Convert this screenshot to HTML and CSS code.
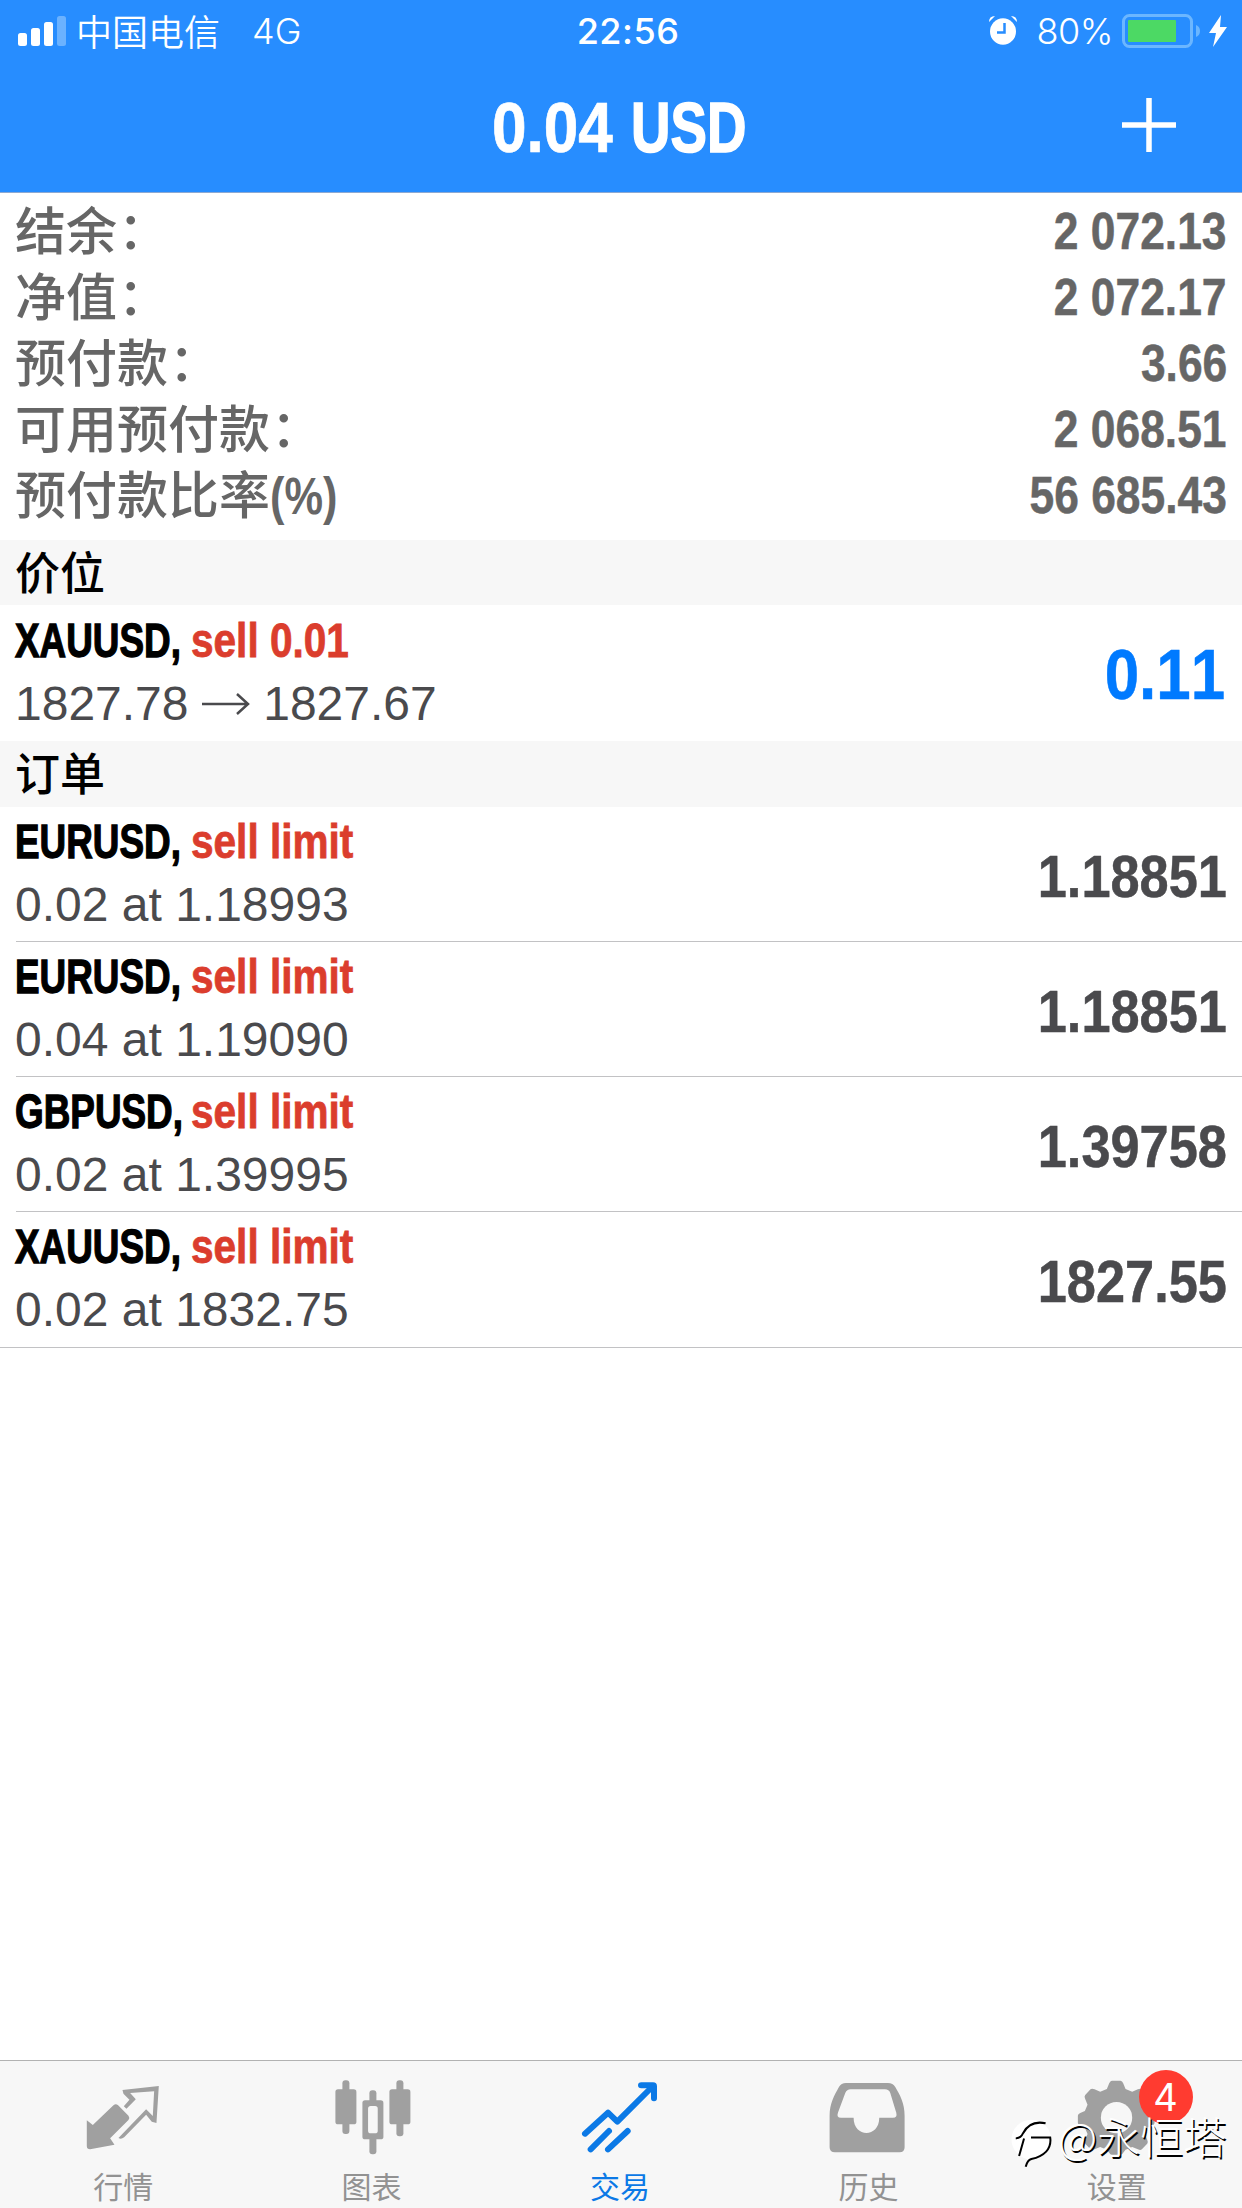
FILE: index.html
```html
<!DOCTYPE html>
<html lang="zh-CN">
<head>
<meta charset="utf-8">
<title>交易</title>
<link rel="stylesheet" href="styles.css">
</head>
<body>
<header class="top">
  <div class="status">
    <div class="status-left">
      <svg class="signal" viewBox="0 0 48 30"><rect y="17" width="9" height="13" rx="2.5"/><rect x="13" y="12" width="9" height="18" rx="2.5"/><rect x="26" y="6" width="9" height="24" rx="2.5"/><rect class="dim" x="39" width="9" height="30" rx="2.5"/></svg>
      <span class="carrier">中国电信</span>
      <span class="network">4G</span>
    </div>
    <span class="clock">22:56</span>
    <div class="status-right">
      <svg class="alarm" viewBox="0 0 28 29"><ellipse cx="14" cy="15.500" rx="13" ry="13.200"/><path d="M0 6Q0 0 6 0Zm28 0Q28 0 22 0Z"/><path class="hands" d="M15.500 7v9.500H8"/></svg>
      <span class="percent">80%</span>
      <svg class="battery" viewBox="0 0 79 34"><rect class="shell" x="1.500" y="1.500" width="68" height="31" rx="6"/><rect class="charge" x="6" y="6" width="48" height="22" rx="1"/><path class="tip" d="M74 11q4 1.500 4 6t-4 6z"/></svg>
      <svg class="bolt" viewBox="0 0 18 32"><path d="M12 0 0 18h7L4 32 18 12h-7z"/></svg>
    </div>
  </div>
  <div class="nav">
    <h1 class="title"><span class="figures">0.04</span><span class="caps">USD</span></h1>
    <svg class="plus" viewBox="0 0 54 54"><path d="M27 0v54M0 27h54"/></svg>
  </div>
</header>

<main>
  <dl class="account">
    <div class="line"><dt>结余<span class="colon">：</span></dt><dd>2 072.13</dd></div>
    <div class="line"><dt>净值<span class="colon">：</span></dt><dd>2 072.17</dd></div>
    <div class="line"><dt>预付款<span class="colon">：</span></dt><dd>3.66</dd></div>
    <div class="line"><dt>可用预付款<span class="colon">：</span></dt><dd>2 068.51</dd></div>
    <div class="line"><dt>预付款比率<span class="unit">(%)</span></dt><dd>56 685.43</dd></div>
  </dl>

  <h2 class="section">价位</h2>
  <div class="row position">
    <div class="info">
      <div class="deal"><span class="symbol">XAUUSD,</span><span class="side">sell 0.01</span></div>
      <div class="detail">1827.78 <svg class="arrow" viewBox="0 0 48 22"><path d="M0 11h45M35 1l11 10-11 10"/></svg> 1827.67</div>
    </div>
    <div class="profit">0.11</div>
  </div>

  <h2 class="section pending">订单</h2>
  <div class="orders">
    <div class="row">
      <div class="info"><div class="deal"><span class="symbol">EURUSD,</span><span class="side">sell limit</span></div><div class="detail">0.02 at 1.18993</div></div>
      <div class="price">1.18851</div>
    </div>
    <div class="row">
      <div class="info"><div class="deal"><span class="symbol">EURUSD,</span><span class="side">sell limit</span></div><div class="detail">0.04 at 1.19090</div></div>
      <div class="price">1.18851</div>
    </div>
    <div class="row">
      <div class="info"><div class="deal"><span class="symbol">GBPUSD,</span><span class="side">sell limit</span></div><div class="detail">0.02 at 1.39995</div></div>
      <div class="price">1.39758</div>
    </div>
    <div class="row">
      <div class="info"><div class="deal"><span class="symbol">XAUUSD,</span><span class="side">sell limit</span></div><div class="detail">0.02 at 1832.75</div></div>
      <div class="price">1827.55</div>
    </div>
  </div>
</main>

<nav class="tabs">
  <div class="tab">
    <svg class="icon" viewBox="246.600 80 252 240"><path d="M261 210 279 224 341 165Q348 159 355 165L386 196Q391 202 386 209L331 264 344 283 271 297Q261 297 261 287Z"/><path d="M368 119 477 107 470 218 456 214 439 193 373 261Q364 268 356 263L439 177 459 197 463 123 391 128 408 147 380 175 372 168 389 148 371 130Z"/></svg>
    <span>行情</span>
  </div>
  <div class="tab">
    <svg class="icon" viewBox="991.800 80 252 240"><rect x="1026" y="90" width="21" height="161" rx="9"/><rect x="1005" y="117" width="63" height="105" rx="8"/><rect x="1188" y="90" width="21" height="168" rx="9"/><rect x="1167" y="117" width="63" height="105" rx="8"/><rect x="1107" y="120" width="21" height="192" rx="9"/><rect x="1086" y="150" width="63" height="117" rx="8"/><rect class="hollow" x="1103" y="167" width="29" height="82" rx="8"/></svg>
    <span>图表</span>
  </div>
  <div class="tab active">
    <svg class="icon" viewBox="297 80 252 240"><path class="stroke" d="M315 250 384 187 412 214 516 110M332 297 387 242M384 297 443 242"/><path d="M484 96H519Q531 96 531 108V144Q531 153 522 153T513 144V125L501 114H484Q474 114 474 105T484 96Z"/></svg>
    <span>交易</span>
  </div>
  <div class="tab">
    <svg class="icon" viewBox="1042.200 80 252 240"><path fill-rule="evenodd" d="M1099 98H1225Q1240 98 1247 110C1262 135 1275 160 1275 196V291Q1275 306 1260 306H1066Q1050 306 1050 291V196C1050 160 1064 135 1078 110Q1085 98 1099 98ZM1113 117Q1102 117 1097 128L1075 187Q1070 202 1084 202H1122C1122 263 1199 263 1199 202H1240Q1254 202 1250 187L1232 128Q1228 117 1216 117Z"/></svg>
    <span>历史</span>
  </div>
  <div class="tab">
    <svg class="icon" viewBox="467.400 80 252 240"><path class="gear" d="M575 91h26q5 0 8 8l7 17 20 8 17-7q8-4 12 0l16 17q4 4 0 12l-7 17 8 19 14 6q7 3 7 8v22q0 5-7 8l-14 6-8 19 7 17q4 8 0 12l-16 17q-4 4-12 0l-17-7-20 8-7 9q-3 6-8 6h-26q-5 0-8-6l-7-9-20-8-17 7q-8 4-12 0l-16-17q-4-4 0-12l7-17-8-19-14-6q-7-3-7-8v-22q0-5 7-8l14-6 8-19-7-17q-4-8 0-12l16-17q4-4 12 0l17 7 20-8 7-17q3-8 8-8z"/><circle class="hollow" cx="589" cy="202" r="47"/></svg>
    <span>设置</span>
    <b class="badge">4</b>
  </div>
</nav>

<div class="watermark">
  <svg class="mark" viewBox="30 168 132 160"><circle cx="94" cy="239" r="60"/><path d="M47 235Q62 236 69 220Q90 180 137 190M57 289 72 236M93 233H151C156 268 132 290 94 298Q82 302 77 321"/></svg>
  <span>@永恒塔</span>
</div>
</body>
</html>
```

FILE: styles.css
```css
* { box-sizing: border-box; }
body {
  margin: 0;
  width: 1242px;
  height: 2208px;
  display: flex;
  flex-direction: column;
  position: relative;
  overflow: hidden;
  background: #fff;
  font-family: "Liberation Sans", "Noto Sans CJK SC", sans-serif;
}
svg { display: block; flex: none; }
h1, h2, dl, dd { margin: 0; }
main { flex: 1; }

.top { height: 193px; background: #278dff; border-bottom: 1px solid #8da9d2; color: #fff; }
.status {
  height: 62px;
  padding: 0 15px 0 18px;
  display: grid;
  grid-template-columns: 1fr auto 1fr;
  align-items: center;
  font-family: Inter, "Noto Sans CJK SC", sans-serif;
  font-size: 36px;
  line-height: 62px;
}
.status-left, .status-right { display: flex; align-items: center; }
.status-right { justify-content: flex-end; }
.signal { width: 48px; height: 30px; margin-right: 10px; fill: #fff; }
.signal .dim { fill: #6bb2ff; }
.carrier { font-family: "Noto Sans CJK SC", sans-serif; font-weight: 350; line-height: 60px; margin: -3px 32px 0 0; }
.network { font-weight: 300; }
.clock { font-weight: 500; letter-spacing: .5px; margin-left: 11px; }
.alarm { width: 28px; height: 29px; margin: -2px 20px 0 0; fill: #fff; }
.alarm .hands { fill: none; stroke: #278dff; stroke-width: 2.500; }
.percent { font-weight: 300; margin-right: 9px; letter-spacing: -.5px; }
.battery { width: 79px; height: 34px; margin: -1px 8px 0 0; }
.battery .shell { fill: none; stroke: #6bb6ff; stroke-width: 3; }
.battery .charge { fill: #4cd964; }
.battery .tip { fill: #6bb6ff; }
.bolt { width: 18px; height: 32px; fill: #fff; }

.nav {
  height: 130px;
  padding: 0 66px;
  display: grid;
  grid-template-columns: 1fr 258px 1fr;
  align-items: center;
}
/* condensed bold: the regular bold face narrowed horizontally */
.title, .deal { display: flex; white-space: pre; }
.title {
  grid-column: 2;
  font: bold 71px/129px "Liberation Sans", sans-serif;
}
.title .figures { flex: 0 0 139px; transform: scaleX(.875); transform-origin: left; -webkit-text-stroke: .7px #fff; }
.title .caps { transform: scaleX(.77); transform-origin: left; -webkit-text-stroke: 1.600px #fff; }
.plus { justify-self: end; width: 54px; height: 54px; margin-top: -4px; stroke: #fff; stroke-width: 5.500; }

.account { height: 347px; padding: 4px 15px 0 16px; color: #666; }
.line { height: 66px; display: flex; justify-content: space-between; line-height: 66px; }
.line dt { margin-left: -1px; font: 500 51px/62px "Noto Sans CJK SC", sans-serif; white-space: nowrap; }
.colon { display: inline-block; transform: translate(1px, -1px); }
.line dd { font: bold 51px/69px "Liberation Sans", sans-serif; transform: scaleX(.87); transform-origin: right; -webkit-text-stroke: .5px #666; }
.unit { display: inline-block; font: bold 51px/62px "Liberation Sans", sans-serif; transform: scaleX(.85); transform-origin: left; }

.section {
  height: 65px;
  padding: 0 15px;
  background: #f7f7f7;
  font: 500 45px/62px "Noto Sans CJK SC", sans-serif;
  color: #000;
}
.pending { height: 66px; }
.row { height: 135px; padding: 3px 15px 0 0; margin-left: 16px; display: flex; justify-content: space-between; border-bottom: 1px solid #c2c2c4; }
.position { height: 136px; padding-top: 4px; border: 0; }
.orders { border-bottom: 1px solid #c2c2c4; }
.orders .row:last-child { border: 0; }
.info { line-height: 63px; font-size: 48px; }
.deal { height: 63px; font-weight: bold; }
.symbol { flex: 0 0 176px; min-width: 0; margin-left: -1px; color: #000; transform: scaleX(.768); transform-origin: 0 50%; -webkit-text-stroke: 1.300px #000; }
.side { color: #db3d2d; transform: scaleX(.845); transform-origin: left; -webkit-text-stroke: .8px #db3d2d; }
.detail { height: 63px; margin-left: -1px; display: flex; align-items: center; white-space: pre; color: #4a4a4d; }
.arrow { width: 48px; height: 22px; fill: none; stroke: #4a4a4d; stroke-width: 2.500; }
.profit, .price {
  font: bold 60px/134px "Liberation Sans", sans-serif;
  font-kerning: none;
  color: #4a4a4d;
  transform: scaleX(.872);
  transform-origin: right;
  -webkit-text-stroke: .5px #4a4a4d;
}
.profit { margin-right: 2px; font-size: 71px; line-height: 132px; color: #007aff; -webkit-text-stroke-color: #007aff; }

.tabs { height: 148px; border-top: 1px solid #b2b2b2; background: #f7f7f7; display: grid; grid-template-columns: repeat(5, 1fr); }
.tab {
  position: relative;
  display: flex;
  flex-direction: column;
  align-items: center;
  padding-top: 16px;
  color: #929292;
  font: 30px/44px "Noto Sans CJK SC", sans-serif;
}
.tab span { margin: 6px 2px 0 0; }
.icon { width: 84px; height: 80px; fill: #a0a0a0; }
.icon .hollow { fill: #f7f7f7; }
.active { color: #0b79e6; }
.active .icon { fill: #0b79e6; }
.icon .stroke { fill: none; stroke: #0b79e6; stroke-width: 18; stroke-linecap: round; stroke-linejoin: round; }
.badge {
  position: absolute;
  left: 145px;
  top: 9px;
  width: 54px;
  height: 54px;
  border-radius: 50%;
  background: #ff3b30;
  color: #fff;
  text-align: center;
  font: 38px/54px Inter, sans-serif;
}
.watermark {
  position: absolute;
  left: 1010px;
  top: 2105px;
  display: flex;
  align-items: flex-start;
  color: #fff;
  font: 300 43px/60px "Noto Sans CJK SC", sans-serif;
  text-shadow: 1.500px 1.500px 0 #000;
}
.mark { width: 44px; height: 53px; margin: 11px 4px 0 0; fill: #fff; }
.mark path { fill: none; stroke: #000; stroke-width: 6; }
```
